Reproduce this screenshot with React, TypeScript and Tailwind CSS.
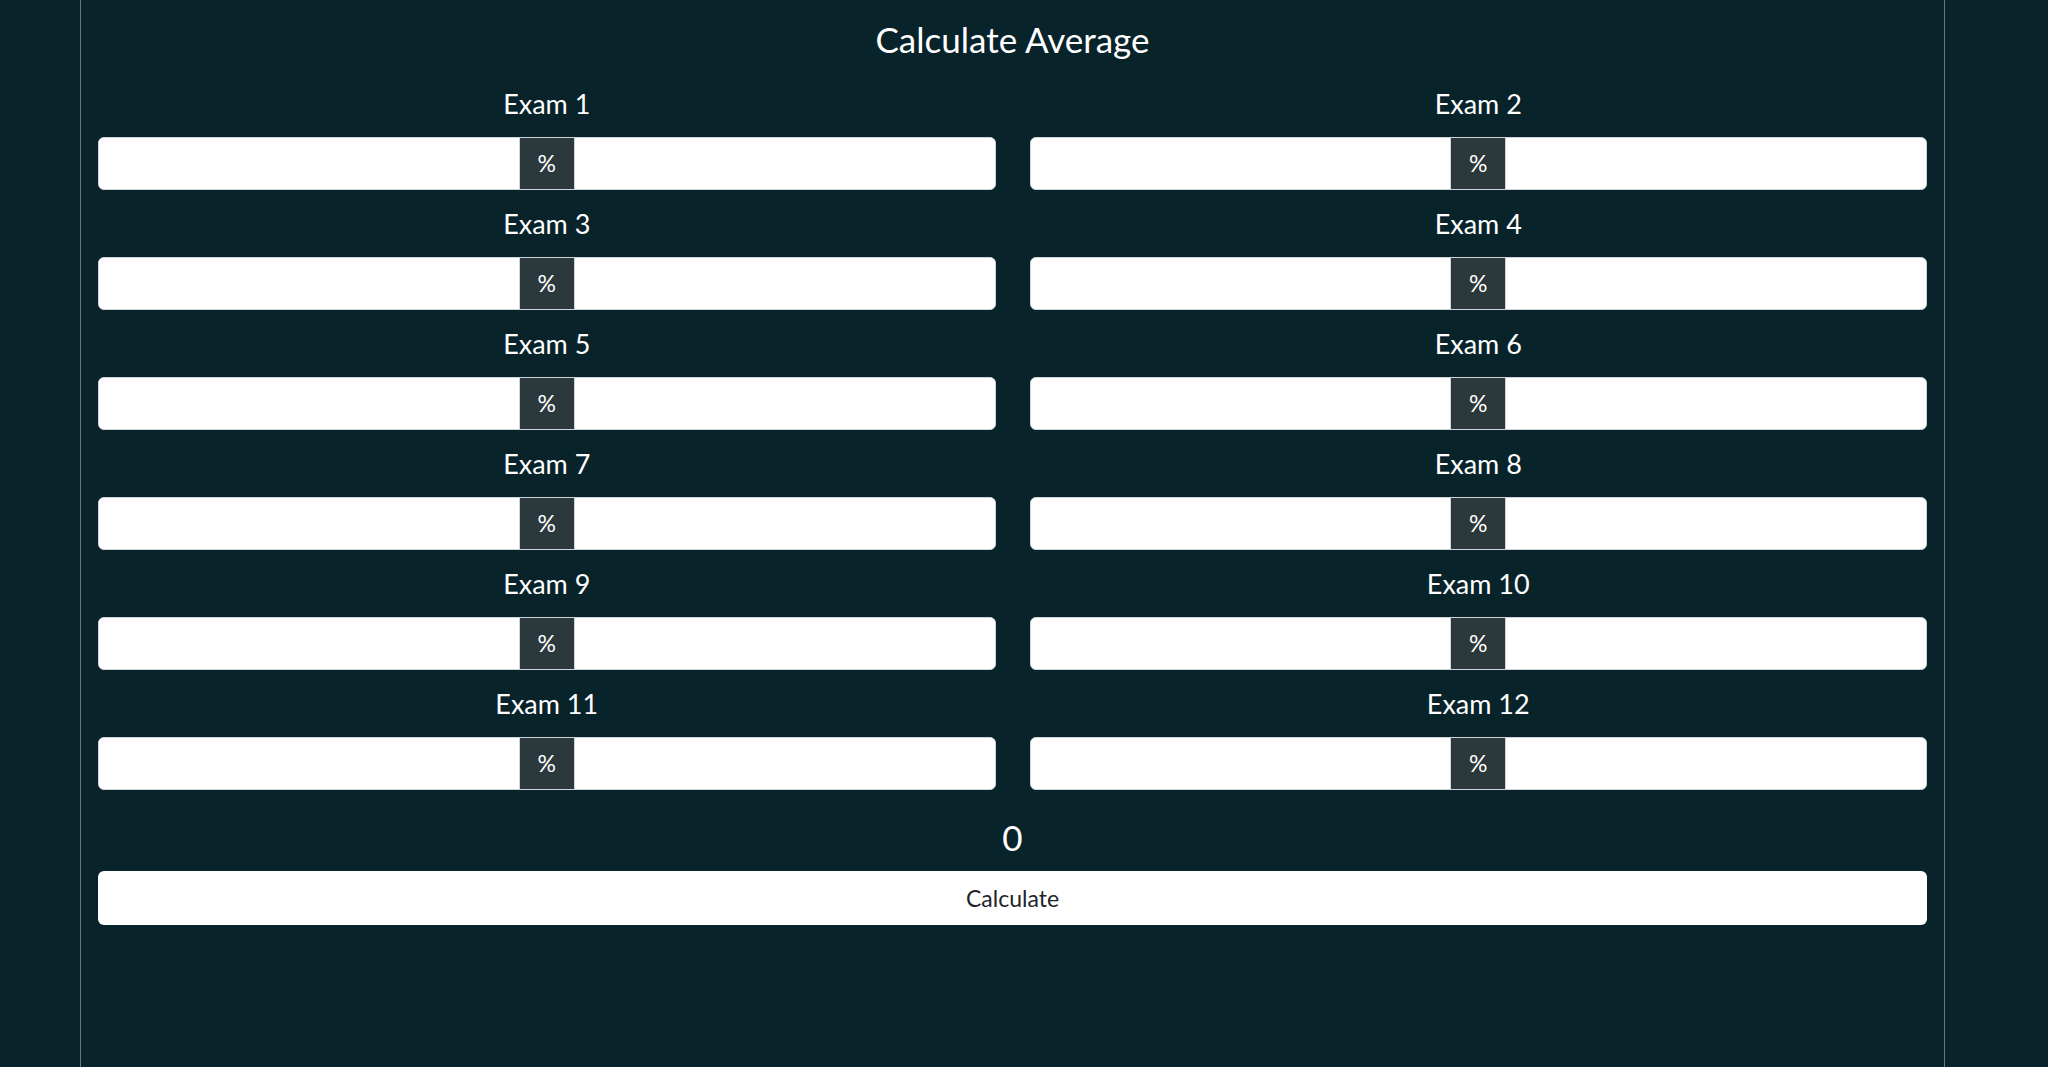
import React from "react";

const exams = Array.from({ length: 12 }, (_, i) => `Exam ${i + 1}`);

function ExamField({ label }: { label: string }) {
  return (
    <div className="flex flex-col">
      <div className="h-[67px] flex items-center justify-center text-[27px] text-white leading-none">
        {label}
      </div>
      <div className="h-[53px] flex rounded-[6px] border border-[#ced4da] overflow-hidden bg-white">
        <div className="flex-1 bg-white" />
        <div className="w-[56px] bg-[#2c393c] border-x border-[#ced4da] flex items-center justify-center text-white text-[23px]">
          %
        </div>
        <div className="flex-1 bg-white" />
      </div>
    </div>
  );
}

export default function App() {
  return (
    <div
      className="min-h-screen w-full bg-[#08232a]"
      style={{ fontFamily: "Lato, 'Open Sans', sans-serif" }}
    >
      <div className="ml-[80px] w-[1865px] min-h-screen border-x border-[#6c757d] px-[17px]">
        <div className="h-[70px] pt-[8px] flex items-center justify-center text-white text-[35px]">
          Calculate Average
        </div>
        <div className="grid grid-cols-2 gap-x-[34px]">
          {exams.map((e) => (
            <ExamField key={e} label={e} />
          ))}
        </div>
        <div className="h-[81px] pt-[13px] flex items-center justify-center text-white text-[35px]">
          0
        </div>
        <button className="w-full h-[54px] bg-white rounded-[6px] text-[#212529] text-[23px] flex items-center justify-center">
          Calculate
        </button>
      </div>
    </div>
  );
}
